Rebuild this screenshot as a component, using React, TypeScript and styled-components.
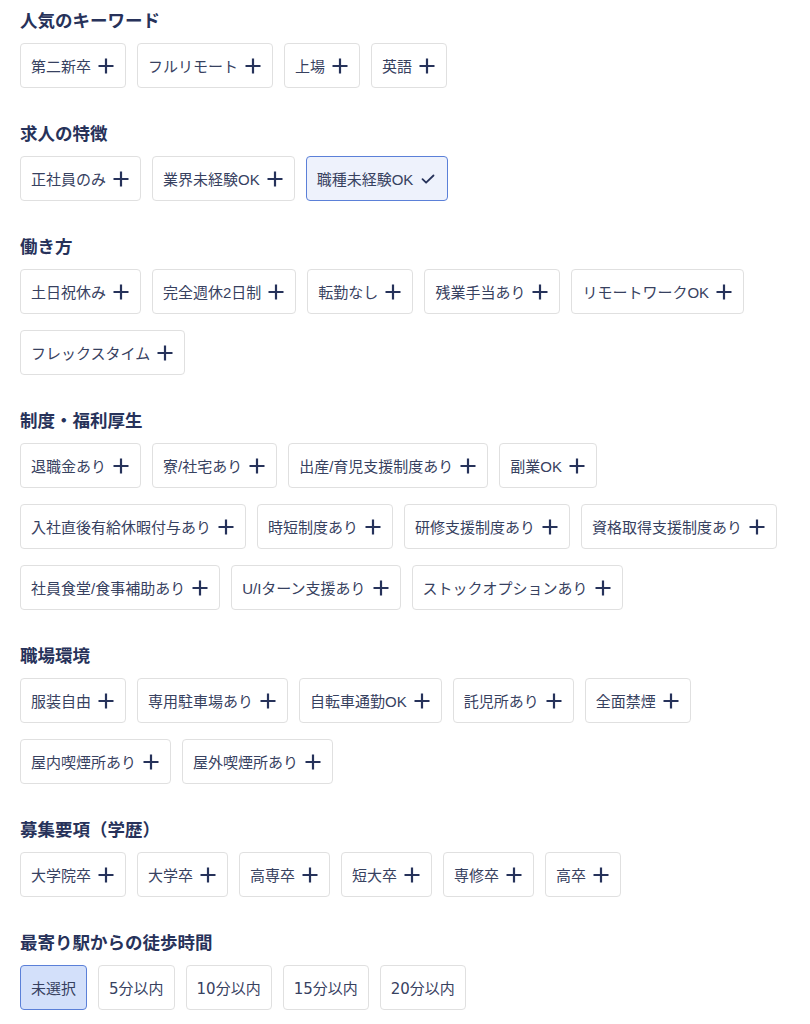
import { useState } from "react";
import styled, { createGlobalStyle } from "styled-components";

type Section = {
  title: string;
  items: string[];
};

const SECTIONS: Section[] = [
  { title: "人気のキーワード", items: ["第二新卒", "フルリモート", "上場", "英語"] },
  { title: "求人の特徴", items: ["正社員のみ", "業界未経験OK", "職種未経験OK"] },
  {
    title: "働き方",
    items: ["土日祝休み", "完全週休2日制", "転勤なし", "残業手当あり", "リモートワークOK", "フレックスタイム"],
  },
  {
    title: "制度・福利厚生",
    items: [
      "退職金あり",
      "寮/社宅あり",
      "出産/育児支援制度あり",
      "副業OK",
      "入社直後有給休暇付与あり",
      "時短制度あり",
      "研修支援制度あり",
      "資格取得支援制度あり",
      "社員食堂/食事補助あり",
      "U/Iターン支援あり",
      "ストックオプションあり",
    ],
  },
  {
    title: "職場環境",
    items: ["服装自由", "専用駐車場あり", "自転車通勤OK", "託児所あり", "全面禁煙", "屋内喫煙所あり", "屋外喫煙所あり"],
  },
  { title: "募集要項（学歴）", items: ["大学院卒", "大学卒", "高専卒", "短大卒", "専修卒", "高卒"] },
];

const WALK_TIMES = ["未選択", "5分以内", "10分以内", "15分以内", "20分以内"];

export default function App() {
  const [selected, setSelected] = useState<string[]>(["職種未経験OK"]);
  const [walk, setWalk] = useState("未選択");

  const toggle = (item: string) => {
    setSelected((prev) => (prev.includes(item) ? prev.filter((x) => x !== item) : [...prev, item]));
  };

  return (
    <>
      <GlobalStyle />
      <Page>
        {SECTIONS.map((section) => (
          <Group key={section.title}>
            <GroupTitle>{section.title}</GroupTitle>
            <ChipList>
              {section.items.map((item) => {
                const active = selected.includes(item);
                return (
                  <Chip key={item} $active={active} onClick={() => toggle(item)}>
                    <span>{item}</span>
                    {active ? <CheckIcon /> : <PlusIcon />}
                  </Chip>
                );
              })}
            </ChipList>
          </Group>
        ))}

        <Group>
          <GroupTitle>最寄り駅からの徒歩時間</GroupTitle>
          <ChipList>
            {WALK_TIMES.map((w) => (
              <RadioChip key={w} $active={walk === w} onClick={() => setWalk(w)}>
                {w}
              </RadioChip>
            ))}
          </ChipList>
        </Group>
      </Page>
    </>
  );
}

function PlusIcon() {
  return (
    <IconSvg viewBox="0 0 18 18" aria-hidden>
      <path d="M9 1.5v15M1.5 9h15" stroke="#26325a" strokeWidth="2.2" fill="none" />
    </IconSvg>
  );
}

function CheckIcon() {
  return (
    <IconSvg viewBox="0 0 18 18" aria-hidden>
      <path
        d="M3.5 9.2l3.6 3.5 7.4-7.2"
        stroke="#26325a"
        strokeWidth="1.8"
        fill="none"
        strokeLinecap="round"
        strokeLinejoin="round"
      />
    </IconSvg>
  );
}

const GlobalStyle = createGlobalStyle`
  body {
    margin: 0;
    background: #ffffff;
    font-family: "Noto Sans CJK JP", "Noto Sans", sans-serif;
  }
`;

const Page = styled.div`
  display: flex;
  flex-direction: column;
  gap: 33px;
  padding: 8px 20px 12px;
`;

const Group = styled.section`
  display: flex;
  flex-direction: column;
  gap: 11px;
`;

const GroupTitle = styled.h2`
  margin: 0;
  font-size: 17.5px;
  line-height: 24px;
  font-weight: 700;
  color: #27325a;
`;

const ChipList = styled.div`
  display: flex;
  flex-wrap: wrap;
  column-gap: 11px;
  row-gap: 16px;
`;

const Chip = styled.button<{ $active?: boolean }>`
  display: inline-flex;
  align-items: center;
  gap: 6px;
  height: 45px;
  padding: 0 10px;
  box-sizing: border-box;
  border-radius: 4px;
  border: 1px solid ${(p) => (p.$active ? "#5b80d8" : "#e0e0e0")};
  background: ${(p) => (p.$active ? "#eef2fc" : "#ffffff")};
  color: #37415f;
  font-family: "Liberation Sans", "Noto Sans CJK JP", sans-serif;
  font-size: 15px;
  cursor: pointer;
`;

const RadioChip = styled(Chip)`
  background: ${(p) => (p.$active ? "#d3e0fa" : "#ffffff")};
  font-family: "DejaVu Sans", "Noto Sans CJK JP", sans-serif;
`;

const IconSvg = styled.svg`
  width: 18px;
  height: 18px;
  flex-shrink: 0;
`;
